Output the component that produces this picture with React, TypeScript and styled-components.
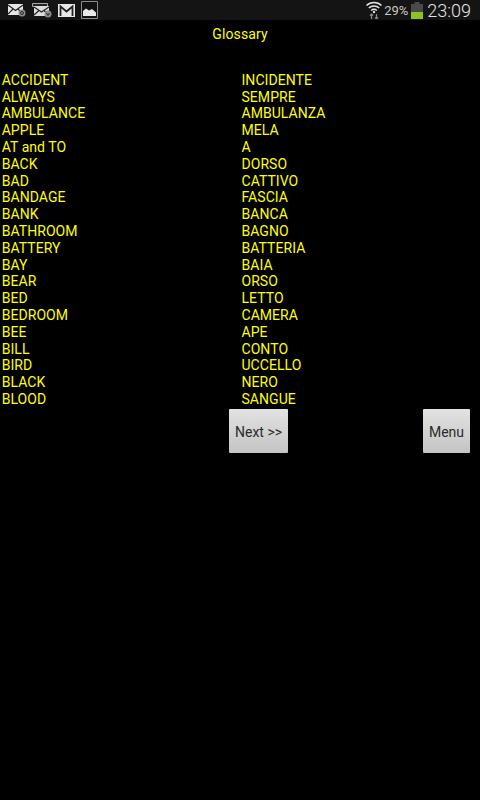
import React from "react";
import styled, { createGlobalStyle } from "styled-components";

const WORDS: [string, string][] = [
  ["ACCIDENT", "INCIDENTE"],
  ["ALWAYS", "SEMPRE"],
  ["AMBULANCE", "AMBULANZA"],
  ["APPLE", "MELA"],
  ["AT and TO", "A"],
  ["BACK", "DORSO"],
  ["BAD", "CATTIVO"],
  ["BANDAGE", "FASCIA"],
  ["BANK", "BANCA"],
  ["BATHROOM", "BAGNO"],
  ["BATTERY", "BATTERIA"],
  ["BAY", "BAIA"],
  ["BEAR", "ORSO"],
  ["BED", "LETTO"],
  ["BEDROOM", "CAMERA"],
  ["BEE", "APE"],
  ["BILL", "CONTO"],
  ["BIRD", "UCCELLO"],
  ["BLACK", "NERO"],
  ["BLOOD", "SANGUE"],
];

const MailIcon = () => (
  <svg width="18" height="14" viewBox="0 0 18 14">
    <path d="M0 1h15v11H0z" fill="#e6e6e6" />
    <path d="M0 2l7.500 5.500L15 2M0 11l5-5M15 11l-5-5" fill="none" stroke="#222" strokeWidth="1.200" />
    <circle cx="14" cy="10" r="3.500" fill="#8c8c8c" />
    <circle cx="14" cy="10" r="1.500" fill="none" stroke="#222" strokeWidth="0.900" />
  </svg>
);

const StackedMailIcon = () => (
  <svg width="20" height="15" viewBox="0 0 20 15">
    <path d="M.5.500h15v3H.5z" fill="#222" stroke="#a8a8a8" />
    <path d="M2 3h15v10H2z" fill="#dcdcdc" />
    <path d="M2 4l7.500 5L17 4M2 12l5-4.500M17 12l-5-4.500" fill="none" stroke="#222" strokeWidth="1.200" />
    <circle cx="16" cy="11" r="3.500" fill="#8c8c8c" />
    <path d="M14.500 10l1.500 2.500 1.500-2.500" fill="none" stroke="#222" strokeWidth="0.900" />
  </svg>
);

const GmailIcon = () => (
  <svg width="17" height="13" viewBox="0 0 17 13">
    <path d="M0 0h17v13H0z" fill="#e8e8e8" />
    <path d="M2.500 12V2.500L8.500 7.500l6-5V12" fill="none" stroke="#222" strokeWidth="1.800" />
  </svg>
);

const PictureIcon = () => (
  <svg width="17" height="18" viewBox="0 0 17 18">
    <path d="M.5.500h16v17H.5z" fill="#111" stroke="#8c8c8c" />
    <path d="M2 15V10l3-2.500 3 2 3-1.500 4 3.500V15z" fill="#e8e8e8" />
  </svg>
);

const WifiIcon = () => (
  <svg width="16" height="18" viewBox="0 0 16 18">
    <path d="M.5 4.500a11 11 0 0 1 15 0M2.800 7a7.500 7.500 0 0 1 10.400 0M5.200 9.500a4 4 0 0 1 5.600 0" fill="none" stroke="#e4e4e4" strokeWidth="1.500" />
    <circle cx="8" cy="11" r="1.200" fill="#e4e4e4" />
    <path d="M5.500 13v5M4 14.500L5.500 13 7 14.500M10.500 18v-5M9 16.500l1.500 1.500 1.500-1.500" fill="none" stroke="#8c8c8c" strokeWidth="1.200" />
  </svg>
);

const BatteryIcon = () => (
  <svg width="12" height="17" viewBox="0 0 12 17">
    <path d="M3.500 0h5v2h-5zM0 2h12v8H0z" fill="#4a4a4a" />
    <path d="M0 10h12v7H0z" fill="#8fc31f" />
  </svg>
);

const App: React.FC = () => (
  <>
    <GlobalStyle />
    <Page>
      <StatusBar>
        <NotifyIcons>
          <MailIcon />
          <StackedMailIcon />
          <GmailIcon />
          <PictureIcon />
        </NotifyIcons>
        <SystemIcons>
          <WifiIcon />
          <Percent>29%</Percent>
          <BatteryIcon />
          <Clock>23:09</Clock>
        </SystemIcons>
      </StatusBar>
      <Title>Glossary</Title>
      <WordTable>
        {WORDS.map(([english, italian]) => (
          <React.Fragment key={english}>
            <Word>{english}</Word>
            <Word>{italian}</Word>
          </React.Fragment>
        ))}
      </WordTable>
      <ButtonRow>
        <NavButton $width={59}>Next &gt;&gt;</NavButton>
        <NavButton $width={47}>Menu</NavButton>
      </ButtonRow>
    </Page>
  </>
);

export default App;

// Styled Components

const GlobalStyle = createGlobalStyle`
  html, body {
    margin: 0;
    background: #000;
  }
`;

const Page = styled.div`
  width: 480px;
  height: 800px;
  background: #000;
  font-family: Roboto, "Liberation Sans", sans-serif;
  overflow: hidden;
`;

const StatusBar = styled.div`
  height: 20px;
  background: #141414;
  display: flex;
  justify-content: space-between;
  align-items: center;
  padding: 0 9px 0 8px;
`;

const NotifyIcons = styled.div`
  display: flex;
  align-items: center;
  gap: 6px;
`;

const SystemIcons = styled.div`
  display: flex;
  align-items: center;
`;

const Percent = styled.span`
  color: #c8c8c8;
  font-size: 13px;
  margin: 0 3px 0 2px;
`;

const Clock = styled.span`
  color: #e4e4e4;
  font-size: 18px;
  font-weight: 300;
  margin-left: 4px;
`;

const Title = styled.div`
  color: #ffff00;
  font-size: 14px;
  line-height: 17px;
  letter-spacing: 0.1px;
  text-align: center;
  margin-top: 6px;
`;

const WordTable = styled.div`
  display: grid;
  grid-template-columns: 239.8px 240px;
  margin-top: 28.8px;
  padding-left: 1.7px;
`;

const Word = styled.div`
  color: #ffff00;
  font-size: 14px;
  line-height: 16.8px;
  letter-spacing: 0.05px;
`;

const ButtonRow = styled.div`
  display: flex;
  justify-content: space-between;
  padding: 1.2px 10px 0 229px;
`;

const NavButton = styled.button<{ $width: number }>`
  width: ${(props) => props.$width}px;
  height: 44px;
  padding: 2px 0 0;
  border: none;
  border-radius: 1px;
  background: linear-gradient(#e2e2e2, #c4c4c4);
  color: #2a2a2a;
  font-family: inherit;
  font-size: 14px;
`;
